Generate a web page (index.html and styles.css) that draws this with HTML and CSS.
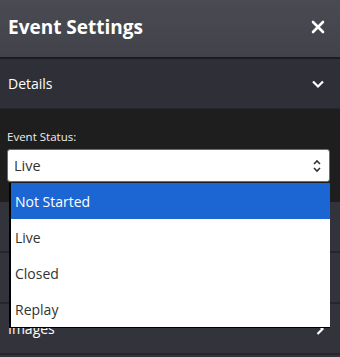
FILE: index.html
```html
<!DOCTYPE html>
<html lang="en">
<head>
    <meta charset="UTF-8">
    <meta name="viewport" content="width=device-width, initial-scale=1.0">
    <title>Event Settings</title>
    <link rel="stylesheet" href="styles.css">
</head>
<body>
    <div class="header">
        <h1>Event Settings</h1>
        <svg class="close" width="14" height="14" viewBox="0 0 14 14">
            <path d="M2 2 L12 12 M12 2 L2 12" stroke="#fff" stroke-width="2.6" stroke-linecap="round"/>
        </svg>
    </div>

    <div class="section open">
        <span>Details</span>
        <svg class="chevron" width="14" height="10" viewBox="0 0 14 10">
            <polyline points="2,2.5 7,7.5 12,2.5" fill="none" stroke="#fff" stroke-width="2.2"/>
        </svg>
    </div>

    <div class="panel">
        <label class="field-label">Event Status:</label>
        <div class="field">
            <div class="select">
                <span>Live</span>
                <svg width="10" height="16" viewBox="0 0 10 16">
                    <polyline points="2,6 5,3 8,6" fill="none" stroke="#333" stroke-width="1.6"/>
                    <polyline points="2,10 5,13 8,10" fill="none" stroke="#333" stroke-width="1.6"/>
                </svg>
            </div>
            <!-- open native option list -->
            <ul class="options">
                <li class="selected">Not Started</li>
                <li>Live</li>
                <li>Closed</li>
                <li>Replay</li>
            </ul>
        </div>
    </div>

    <!-- rows hidden behind the open list -->
    <div class="section"></div>
    <div class="section"></div>
    <div class="section">
        <span>Images</span>
        <svg class="chevron" width="10" height="14" viewBox="0 0 10 14">
            <polyline points="2.5,2 7.5,7 2.5,12" fill="none" stroke="#fff" stroke-width="2.2"/>
        </svg>
    </div>
    <div class="section"></div>
</body>
</html>
```

FILE: styles.css
```css
body {
    font-family: 'Open Sans', 'DejaVu Sans', sans-serif;
    background-color: #33343b;
    color: #fff;
    margin: 0;
    overflow: hidden;
}
.header {
    height: 57px;
    display: flex;
    align-items: center;
    justify-content: space-between;
    padding: 0 15px 0 8px;
    background: linear-gradient(#4a4b52, #42434a);
    border-bottom: 2px solid #1c1c1f;
}
.header h1 {
    font-size: 19px;
    font-weight: 700;
    margin: 0 0 4px 0;
}
.close {
    margin-bottom: 4px;
}
.section {
    height: 49px;
    display: flex;
    align-items: center;
    justify-content: space-between;
    padding: 0 15px 0 8px;
    font-size: 14px;
    background-color: #33343b;
    border-bottom: 2px solid #25262b;
}
.section.open {
    background-color: #2e2f37;
    border-bottom: 1px solid #25262b;
}
.panel {
    background-color: #1e1e1e;
    padding: 20px 10px 20px 7px;
    height: 53px;
}
.field-label {
    display: block;
    font-size: 11.5px;
    color: #eee;
    margin-bottom: 5px;
}
.field {
    position: relative;
}
.select {
    height: 31px;
    display: flex;
    align-items: center;
    justify-content: space-between;
    padding: 0 7px 0 6px;
    background-color: #fff;
    border: 1px solid #3a8a4e;
    border-radius: 3px;
    color: #333;
    font-size: 14.5px;
}
.options {
    position: absolute;
    top: 34px;
    left: 2px;
    right: 0;
    margin: 0;
    padding: 0;
    list-style: none;
    background-color: #fff;
    border-left: 2px solid #000;
    border-bottom: 1px solid #000;
    z-index: 2;
}
.options li {
    height: 36px;
    display: flex;
    align-items: center;
    padding-left: 4px;
    font-size: 14px;
    color: #333;
}
.options li.selected {
    background-color: #1b66d2;
    color: #fff;
}
```
